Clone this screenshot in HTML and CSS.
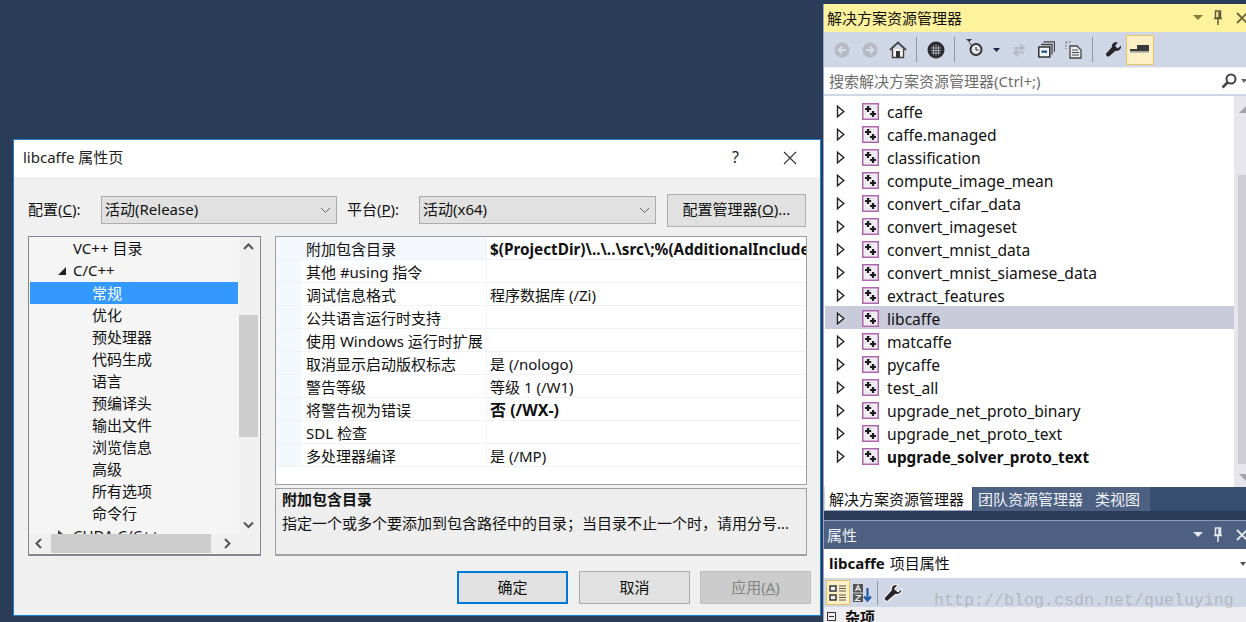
FILE: index.html
```html
<!DOCTYPE html>
<html lang="zh">
<head>
<meta charset="utf-8">
<title>libcaffe 属性页</title>
<link rel="stylesheet" href="styles.css">
</head>
<body>
<svg class="defs" width="0" height="0">
  <symbol id="proj" viewBox="0 0 17 17">
    <rect x="0.750" y="0.750" width="15.500" height="15.500" fill="#efedf2" stroke="#b066ae" stroke-width="1.500"/>
    <path d="M6 3.500h2.500M6.500 6h3.500M10 9h2.500M10.500 11.500h3" stroke="#9a9aa0" fill="none"/>
    <path d="M6 3v6M3 6h6M11 8v6M8 11h6" stroke="#1d1d1f" stroke-width="2.200" fill="none"/>
  </symbol>
  <symbol id="tri" viewBox="0 0 9 13">
    <path d="M1.500 1.200 7.800 6.500 1.500 11.800Z" fill="#fff" stroke="#222" stroke-width="1.400"/>
  </symbol>
</svg>

<main class="desktop">
  <section class="dialog">
    <header class="dlg-title">
      <span class="dlg-name">libcaffe 属性页</span>
      <span class="dlg-controls">
        <span class="help">?</span>
        <svg class="close" width="14" height="14" viewBox="0 0 14 14"><path d="M1 1 13 13M13 1 1 13" stroke="#333" stroke-width="1.100"/></svg>
      </span>
    </header>
    <div class="dlg-body">
      <div class="config-row">
        <label class="lbl lbl-config">配置(<u>C</u>):</label>
        <div class="select sel-config">活动(Release)<svg class="chev" width="11" height="7" viewBox="0 0 11 7"><path d="M1 1 5.500 5.500 10 1" stroke="#666" fill="none"/></svg></div>
        <label class="lbl lbl-platform">平台(<u>P</u>):</label>
        <div class="select sel-platform">活动(x64)<svg class="chev" width="11" height="7" viewBox="0 0 11 7"><path d="M1 1 5.500 5.500 10 1" stroke="#666" fill="none"/></svg></div>
        <button class="btn btn-mgr">配置管理器(<u>O</u>)...</button>
      </div>
      <div class="panes">
        <div class="treebox">
          <div class="tree-main">
            <ul class="dlg-tree">
              <li class="l1 latin">VC++ 目录</li>
              <li class="l1 latin open">C/C++</li>
              <li class="l2 sel">常规</li>
              <li class="l2">优化</li>
              <li class="l2">预处理器</li>
              <li class="l2">代码生成</li>
              <li class="l2">语言</li>
              <li class="l2">预编译头</li>
              <li class="l2">输出文件</li>
              <li class="l2">浏览信息</li>
              <li class="l2">高级</li>
              <li class="l2">所有选项</li>
              <li class="l2">命令行</li>
              <li class="l1 closed">CUDA C/C++</li>
            </ul>
            <div class="vbar">
              <svg width="19" height="19" viewBox="0 0 19 19"><path d="M5 12 9.500 7.500 14 12" stroke="#555" stroke-width="2" fill="none"/></svg>
              <div class="vthumb"></div>
              <svg class="vdown" width="19" height="19" viewBox="0 0 19 19"><path d="M5 7.500 9.500 12 14 7.500" stroke="#555" stroke-width="2" fill="none"/></svg>
            </div>
          </div>
          <div class="hbar">
            <svg width="22" height="19" viewBox="0 0 22 19"><path d="M12 5 7.500 9.500 12 14" stroke="#555" stroke-width="2" fill="none"/></svg>
            <div class="hthumb"></div>
            <svg class="hright" width="21" height="19" viewBox="0 0 21 19"><path d="M8 5 12.500 9.500 8 14" stroke="#555" stroke-width="2" fill="none"/></svg>
          </div>
        </div>
        <div class="rightcol">
          <div class="grid">
            <div class="prow first"><span class="pname">附加包含目录</span><b class="pval path">$(ProjectDir)\..\..\src\;%(AdditionalIncludeDirectories)</b></div>
            <div class="prow"><span class="pname">其他 #using 指令</span><span class="pval"></span></div>
            <div class="prow"><span class="pname">调试信息格式</span><span class="pval">程序数据库 (/Zi)</span></div>
            <div class="prow"><span class="pname">公共语言运行时支持</span><span class="pval"></span></div>
            <div class="prow"><span class="pname">使用 Windows 运行时扩展</span><span class="pval"></span></div>
            <div class="prow"><span class="pname">取消显示启动版权标志</span><span class="pval">是 (/nologo)</span></div>
            <div class="prow"><span class="pname">警告等级</span><span class="pval">等级 1 (/W1)</span></div>
            <div class="prow"><span class="pname">将警告视为错误</span><b class="pval">否 (/WX-)</b></div>
            <div class="prow"><span class="pname">SDL 检查</span><span class="pval"></span></div>
            <div class="prow"><span class="pname">多处理器编译</span><span class="pval">是 (/MP)</span></div>
          </div>
          <div class="desc">
            <b>附加包含目录</b>
            <span>指定一个或多个要添加到包含路径中的目录；当目录不止一个时，请用分号...</span>
          </div>
        </div>
      </div>
      <div class="actions">
        <button class="btn act primary">确定</button>
        <button class="btn act">取消</button>
        <button class="btn act disabled">应用(<u>A</u>)</button>
      </div>
    </div>
  </section>

  <aside class="dock">
    <div class="pane-head active">
      <span>解决方案资源管理器</span>
      <span class="pane-ctl">
        <svg width="12" height="6" viewBox="0 0 12 6"><path d="M1 0h10L6 5Z" fill="#8a7a3a"/></svg>
        <svg width="10" height="16" viewBox="0 0 10 16"><path d="M2.500 1h5v7h-5zM1 8.500h8M5 9v6M6 2v6" stroke="#5f5a3c" stroke-width="1.500" fill="none"/></svg>
        <svg width="12" height="12" viewBox="0 0 12 12"><path d="M1 1 11 11M11 1 1 11" stroke="#6a6540" stroke-width="1.800"/></svg>
      </span>
    </div>
    <div class="toolbar">
      <svg class="ti" width="16" height="16" viewBox="0 0 16 16"><circle cx="8" cy="8" r="7.500" fill="#b6bac2"/><path d="M12 8H5M8 4.500 4.500 8 8 11.500" stroke="#d8dce6" stroke-width="2" fill="none"/></svg>
      <svg class="ti g2" width="16" height="16" viewBox="0 0 16 16"><circle cx="8" cy="8" r="7.500" fill="#b6bac2"/><path d="M4 8h7M8 4.500 11.500 8 8 11.500" stroke="#d8dce6" stroke-width="2" fill="none"/></svg>
      <svg class="ti g1" width="18" height="18" viewBox="0 0 18 18"><path d="M1 9 9 1.500 17 9" stroke="#444" stroke-width="1.800" fill="none"/><path d="M3.500 8v8.500h11V8" fill="#f4f3ef" stroke="#444" stroke-width="1.400"/><rect x="7" y="10" width="4" height="6.500" fill="#333"/></svg>
      <i class="sep gm1"></i>
      <svg class="ti" width="18" height="18" viewBox="0 0 18 18"><circle cx="9" cy="9" r="8.500" fill="#2e2e30"/><path d="M6.500 4.500v9M9 3.500v11M11.500 4.500v9M4 7h10M4 9.500h10M4.500 12h9" stroke="#b9bec9" stroke-width=".8"/></svg>
      <i class="sep gm1"></i>
      <svg class="ti clock g1" width="18" height="18" viewBox="0 0 18 18"><path d="M0 0h6L3 3Z" fill="#333"/><path d="M3.500 3.500 5 6" stroke="#333"/><circle cx="10" cy="10.500" r="5.500" fill="#e4e6ea" stroke="#333" stroke-width="2"/><path d="M10 8v3h2.500" stroke="#333" fill="none"/></svg>
      <svg class="ti gm1" width="7" height="4" viewBox="0 0 7 4"><path d="M0 0h7L3.500 4Z" fill="#1b2a4c"/></svg>
      <svg class="ti g1" width="16" height="14" viewBox="0 0 16 14"><path d="M3 5h9M9 1.500 13 5 9 7M13 9.500H4M7 6.500 3 9.500 7 13" stroke="#b5bac4" stroke-width="1.800" fill="none"/></svg>
      <svg class="ti g1" width="17" height="17" viewBox="0 0 17 17"><path d="M5.500 .8h11v10M3 3.500h11v10" fill="none" stroke="#444" stroke-width="1.300"/><rect x=".8" y="6" width="11" height="10" fill="#f2f3f6" stroke="#333" stroke-width="1.500"/><rect x="3.500" y="9.500" width="5.500" height="2.300" fill="#20528c"/></svg>
      <svg class="ti" width="17" height="18" viewBox="0 0 17 18"><path d="M1 1h6M1 1v7M3 5h0" stroke="#666" stroke-dasharray="1.500 1.500" fill="none"/><path d="M5 5h7l4 4v8H5Z" fill="#eceef2" stroke="#444" stroke-width="1.300"/><path d="M7 9h6M7 11.500h7M7 14h7" stroke="#444"/></svg>
      <i class="sep"></i>
      <svg class="ti g2" width="17" height="17" viewBox="0 0 17 17"><path d="M16 4.500 12.800 7.500 10 5 12.800 1.500C9.500.2 6.500 2.500 7 6L1.200 12.500c-1 1.500 1.500 4 3 2.800L10.500 9.800C14 10.500 16.500 8 16 4.500Z" fill="#26262a"/></svg>
      <span class="tbtn-on"><svg width="20" height="9" viewBox="0 0 20 9"><rect x="7" y="0" width="12" height="6" fill="#3a3a3a"/><rect x="0" y="4" width="19" height="2.500" fill="#3a3a3a"/><rect x="0" y="6.500" width="19" height="1.500" fill="#b8b8b8"/></svg></span>
    </div>
    <div class="search">
      <span>搜索解决方案资源管理器(Ctrl+;)</span>
      <svg class="mag" width="16" height="16" viewBox="0 0 16 16"><circle cx="10" cy="6" r="4.500" fill="none" stroke="#444" stroke-width="2"/><path d="M6.500 9.500 1.500 14.500" stroke="#444" stroke-width="2.600"/></svg>
      <svg class="searchdrop" width="6" height="4" viewBox="0 0 6 4"><path d="M0 0h6L3 4Z" fill="#666"/></svg>
    </div>
    <div class="sol-wrap">
      <ul class="sol-tree">
        <li><svg class="tri"><use href="#tri"/></svg><svg class="pi"><use href="#proj"/></svg>caffe</li>
        <li><svg class="tri"><use href="#tri"/></svg><svg class="pi"><use href="#proj"/></svg>caffe.managed</li>
        <li><svg class="tri"><use href="#tri"/></svg><svg class="pi"><use href="#proj"/></svg>classification</li>
        <li><svg class="tri"><use href="#tri"/></svg><svg class="pi"><use href="#proj"/></svg>compute_image_mean</li>
        <li><svg class="tri"><use href="#tri"/></svg><svg class="pi"><use href="#proj"/></svg>convert_cifar_data</li>
        <li><svg class="tri"><use href="#tri"/></svg><svg class="pi"><use href="#proj"/></svg>convert_imageset</li>
        <li><svg class="tri"><use href="#tri"/></svg><svg class="pi"><use href="#proj"/></svg>convert_mnist_data</li>
        <li><svg class="tri"><use href="#tri"/></svg><svg class="pi"><use href="#proj"/></svg>convert_mnist_siamese_data</li>
        <li><svg class="tri"><use href="#tri"/></svg><svg class="pi"><use href="#proj"/></svg>extract_features</li>
        <li class="hl"><svg class="tri"><use href="#tri"/></svg><svg class="pi"><use href="#proj"/></svg>libcaffe</li>
        <li><svg class="tri"><use href="#tri"/></svg><svg class="pi"><use href="#proj"/></svg>matcaffe</li>
        <li><svg class="tri"><use href="#tri"/></svg><svg class="pi"><use href="#proj"/></svg>pycaffe</li>
        <li><svg class="tri"><use href="#tri"/></svg><svg class="pi"><use href="#proj"/></svg>test_all</li>
        <li><svg class="tri"><use href="#tri"/></svg><svg class="pi"><use href="#proj"/></svg>upgrade_net_proto_binary</li>
        <li><svg class="tri"><use href="#tri"/></svg><svg class="pi"><use href="#proj"/></svg>upgrade_net_proto_text</li>
        <li class="bold"><svg class="tri"><use href="#tri"/></svg><svg class="pi"><use href="#proj"/></svg>upgrade_solver_proto_text</li>
      </ul>
      <div class="sol-bar">
        <svg width="14" height="8" viewBox="0 0 14 8"><path d="M0 7h14L7 0Z" fill="#a3a3ad"/></svg>
        <div class="sol-thumb"></div>
        <svg class="sol-down" width="14" height="8" viewBox="0 0 14 8"><path d="M0 1h14L7 8Z" fill="#a3a3ad"/></svg>
      </div>
    </div>
    <div class="tabs">
      <span class="tab on">解决方案资源管理器</span>
      <span class="tabgroup"><span class="tab">团队资源管理器</span><span class="tab">类视图</span></span>
    </div>
    <div class="pane-head dark">
      <span>属性</span>
      <span class="pane-ctl">
        <svg width="12" height="6" viewBox="0 0 12 6"><path d="M1 0h10L6 5Z" fill="#e6e9f0"/></svg>
        <svg width="10" height="16" viewBox="0 0 10 16"><path d="M2.500 1h5v7h-5zM1 8.500h8M5 9v6M6 2v6" stroke="#e6e9f0" stroke-width="1.500" fill="none"/></svg>
        <svg width="12" height="12" viewBox="0 0 12 12"><path d="M1 1 11 11M11 1 1 11" stroke="#e6e9f0" stroke-width="1.800"/></svg>
      </span>
    </div>
    <div class="prop-title"><b>libcaffe</b> 项目属性<svg class="propdrop" width="6" height="4" viewBox="0 0 6 4"><path d="M0 0h6L3 4Z" fill="#555"/></svg></div>
    <div class="prop-tools">
      <span class="tbtn-cat"><svg width="20" height="20" viewBox="0 0 20 20"><path d="M2 3h6v5H2zM2 12h6v5H2z" fill="#f3f3f3" stroke="#333" stroke-width="1.500"/><path d="M11 3h7M11 5.500h7M11 8h7M11 12h7M11 14.500h7M11 17h7" stroke="#555"/></svg></span>
      <svg width="20" height="20" viewBox="0 0 20 20"><rect x="1" y="1" width="10" height="8.500" fill="#555"/><rect x="1" y="10.500" width="10" height="8.500" fill="#555"/><path d="M3.500 8 6 2.500 8.500 8M4.500 6.300h3M3.500 12.500h5L3.500 17.500h5" stroke="#eee" stroke-width="1.200" fill="none"/><path d="M15.500 5v12M12 13.500l3.500 4 3.500-4" stroke="#1d5da8" stroke-width="2.200" fill="none"/></svg>
      <i class="sep short"></i>
      <svg class="wrench2" width="20" height="20" viewBox="0 0 17 17"><path d="M16 4.500 12.800 7.500 10 5 12.800 1.500C9.500.2 6.500 2.500 7 6L1.200 12.500c-1 1.500 1.500 4 3 2.800L10.500 9.800C14 10.500 16.500 8 16 4.500Z" fill="#26262a" stroke="#f2f2f2"/></svg>
    </div>
    <div class="prop-section"><span class="minus"></span><b>杂项</b></div>
  </aside>
  <div class="watermark">http://blog.csdn.net/queluying</div>
</main>
</body>
</html>
```

FILE: styles.css
```css
* { box-sizing: border-box; }
html, body { margin: 0; padding: 0; height: 100%; overflow: hidden; }
body { background: #2b3c59; font: 15px/20px "Noto Sans", "Noto Sans CJK SC", sans-serif; color: #111; }
.defs { position: absolute; }
ul { list-style: none; margin: 0; padding: 0; }
.desktop { position: relative; width: 1246px; height: 622px; overflow: hidden; }

/* dialog window */
.dialog { position: absolute; left: 13px; top: 139px; width: 808px; height: 477px; border: 1px solid #1a7fd0; background: #f0f0f0; display: flex; flex-direction: column; }
.dlg-title { height: 37px; background: #fff; display: flex; align-items: center; justify-content: space-between; padding: 0 23px 3px 9px; color: #222; }
.dlg-controls { display: flex; align-items: center; gap: 44px; }
.help { font-size: 16px; }
.close { margin-top: 2px; }
.dlg-body { flex: 1; padding: 16px 0 0 14px; display: flex; flex-direction: column; }
.config-row { display: flex; align-items: center; height: 34px; }
.lbl { display: block; padding-bottom: 2px; }
.lbl-config { width: 73px; }
.lbl-platform { width: 72px; margin-left: 10px; }
.select { height: 28px; background: #e1e1e1; border: 1px solid #adadad; padding: 2px 0 0 3px; position: relative; }
.sel-config { width: 236px; }
.sel-platform { width: 237px; }
.chev { position: absolute; right: 5px; top: 10px; }
.btn { font: inherit; color: #111; background: #e1e1e1; border: 1px solid #adadad; padding: 0 0 2px; }
.btn-mgr { width: 139px; height: 33px; margin-left: 11px; }
.panes { display: flex; gap: 14px; margin-top: 9px; height: 320px; }

.treebox { width: 233px; border: 1px solid #82878f; background: #f5f5f5; display: flex; flex-direction: column; border-width: 1px 1px 2px; }
.tree-main { flex: 1; display: flex; min-height: 0; }
.dlg-tree { flex: 1; overflow: hidden; padding: 1px 1px 0; }
.dlg-tree li { height: 22px; line-height: 22px; position: relative; white-space: nowrap; }
.dlg-tree .latin { line-height: 20px; }
.l1 { padding-left: 43px; }
.l2 { padding-left: 62px; }
.sel { background: #3399ff; color: #fff; }
.open::before { content: ""; position: absolute; left: 28px; top: 7px; border-style: solid; border-width: 0 0 8px 8px; border-color: transparent transparent #222 transparent; }
.closed::before { content: ""; position: absolute; left: 28px; top: 6px; border-style: solid; border-width: 4px 0 4px 5px; border-color: transparent transparent transparent #444; }
.vbar { width: 19px; background: #f0f0f0; margin-right: 2px; display: flex; flex-direction: column; position: relative; }
.vthumb { position: absolute; left: 0; right: 0; top: 78px; height: 122px; background: #cdcdcd; }
.vdown { position: absolute; bottom: 0; left: 0; }
.hbar { height: 19px; background: #f0f0f0; display: flex; position: relative; margin-bottom: 1px; flex: none; }
.hthumb { width: 160px; background: #cdcdcd; }
.hright { margin-left: 6px; }

.rightcol { width: 532px; display: flex; flex-direction: column; gap: 3px; }
.grid { height: 249px; background: #fff; border: 1px solid #a0a0a0; overflow: hidden; }
.prow { height: 23px; display: flex; background: linear-gradient(90deg, #f4f7fc 25px, #fff 25px); border-bottom: 1px solid #f0f3fa; white-space: nowrap; line-height: 25px; }
.pname { width: 211px; padding-left: 30px; flex: none; border-right: 1px solid #f0f3fa; }
.pval { padding-left: 3px; overflow: hidden; font-weight: 400; }
b.pval { font-weight: 700; font-size: 16px; }
b.path { font-size: 15.300px; }
.first .pname { background: #f4f7fc; }
.desc { height: 68px; background: #eee; border: 1px solid #a0a0a0; border-bottom-width: 2px; padding: 0 6px; display: flex; flex-direction: column; gap: 4px; }

.actions { display: flex; gap: 11px; margin-top: 15px; padding-left: 429px; }
.act { width: 111px; height: 33px; }
.primary { border: 2px solid #0078d7; }
.disabled { background: #ccc; border-color: #bfbfbf; color: #838383; margin-left: -1px; }

/* dock */
.dock { position: absolute; left: 823px; top: 4px; width: 423px; height: 618px; display: flex; flex-direction: column; border-left: 1px solid #9aa7c6; }
.pane-head { height: 28px; display: flex; align-items: center; justify-content: space-between; padding: 0 0 0 3px; flex: none; }
.active { background: #fff29d; color: #111; }
.dark { background: #4d6082; color: #eef1f7; margin-top: 9px; height: 29px; border-top: 1px solid #8e9cba; }
.pane-ctl { display: flex; align-items: center; gap: 13px; margin-right: -2px; }
.pane-ctl svg:first-child { margin-right: -4px; }
.toolbar { height: 35px; background: #cfd6e5; display: flex; align-items: center; padding-left: 10px; gap: 10px; flex: none; }
.sep { width: 1px; height: 25px; background: #8f96a3; }
.sep.short { height: 24px; margin: 0 2px 0 3px; }
.ti { flex: none; }
.g1 { margin-left: 1px; }
.g2 { margin-left: 2px; }
.gm1 { margin-left: -1px; }
.clock { margin-top: -3px; }
.tbtn-on { width: 28px; height: 30px; background: #fff1c5; border: 1px solid #e5c365; display: flex; align-items: center; justify-content: center; margin-left: -6px; }
.search { height: 29px; flex: none; background: #fff; border-top: 1px solid #eef0f5; border-bottom: 2px solid #cfd6e5; display: flex; align-items: center; padding-left: 5px; color: #6d6d6d; position: relative; }
.mag { position: absolute; right: 9px; top: 5px; }
.searchdrop { position: absolute; right: -1px; top: 11px; }
.sol-wrap { height: 391px; background: #fff; flex: none; display: flex; position: relative; }
.sol-tree { padding: 3px 0 0 0; flex: 1; overflow: hidden; font-size: 15.600px; }
.sol-tree li { height: 23px; display: flex; align-items: center; white-space: nowrap; line-height: 19px; padding: 4px 0 0 12px; }
.tri { width: 9px; height: 13px; flex: none; margin-top: -2px; }
.pi { width: 17px; height: 17px; margin: -2px 8px 0 17px; flex: none; }
.hl { background: #c9cbdb; margin-left: 1px; padding-left: 11px !important; }
.bold { font-weight: 700; font-size: 15.300px; }
.sol-bar { width: 12px; background: #e6e6ec; position: relative; overflow: hidden; padding: 10px 0 0 5px; }
.sol-bar svg { display: block; }
.sol-thumb { position: absolute; right: 0; top: 79px; width: 8px; height: 289px; background: #cdcdd3; }
.sol-down { position: absolute; bottom: 6px; left: 5px; }
.tabs { height: 24px; background: #364e6f; display: flex; flex: none; }
.tab { height: 24px; line-height: 24px; padding: 0 7px 0 5px; color: #eef1f7; }
.tab:last-child { padding-right: 7px; }
.tab.on { background: #fff; color: #111; width: 148px; border-left: 1px solid #cfd6e5; padding-left: 4px; border-bottom: 1px solid #9aa7c6; }
.tabgroup { background: #4d6082; display: flex; margin-left: 1px; padding-right: 3px; }
.prop-title { height: 29px; background: #fff; display: flex; align-items: center; padding: 0 0 2px 5px; gap: 5px; flex: none; position: relative; }
.propdrop { position: absolute; right: 0; top: 13px; }
.prop-tools { height: 29px; background: #cfd6e5; display: flex; align-items: center; padding-left: 2px; gap: 2px; flex: none; }
.tbtn-cat { width: 24px; height: 25px; background: #fff1c5; border: 1px solid #e5c365; display: flex; align-items: center; justify-content: center; }
.wrench2 { margin-left: 1px; }
.prop-section { background: #eeeef2; height: 15px; flex: none; display: flex; align-items: flex-start; padding-left: 3px; gap: 9px; overflow: hidden; }
.minus { width: 9px; height: 9px; border: 1px solid #333; margin-top: 5px; background: linear-gradient(#333, #333) center / 5px 1px no-repeat; flex: none; }

.watermark { position: absolute; left: 934px; top: 591px; font: 16.670px/20px "Liberation Mono", monospace; color: rgba(130, 130, 130, .38); white-space: nowrap; }
```
